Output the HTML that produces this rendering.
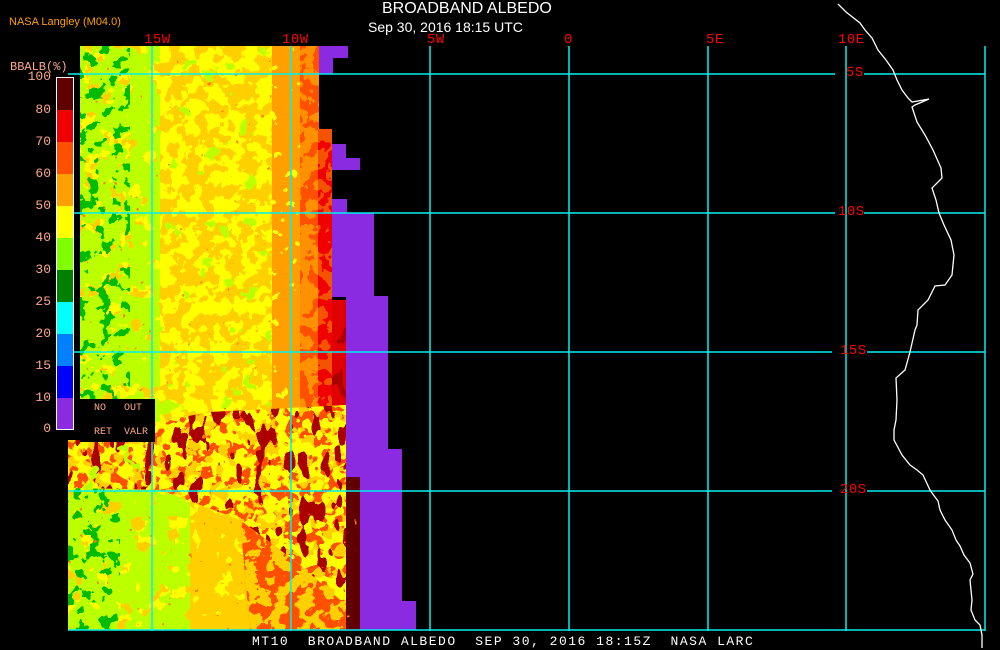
<!DOCTYPE html>
<html><head><meta charset="utf-8"><style>
html,body{margin:0;padding:0;background:#000;width:1000px;height:650px;overflow:hidden;font-family:"Liberation Sans",sans-serif}
.t{position:absolute;white-space:pre}
.m{font-family:"Liberation Mono","DejaVu Sans Mono",monospace}
.lab{color:#ffa888;font-size:13px;position:absolute;right:949px;text-align:right}
.g{color:#f00;font-size:14px;letter-spacing:0.5px}
</style></head><body>
<svg width="1000" height="650" style="position:absolute;left:0;top:0">
<defs>
<clipPath id="dc"><polygon points="80,46 319,46 319,129 332,129 332,300 346,300 346,477 360,477 360,630 68,630 68,440 80,440"/></clipPath>
<clipPath id="band"><polygon points="68,440 140,425 210,412 346,405 346,605 300,565 240,520 160,490 68,488"/></clipPath>
<clipPath id="below"><polygon points="68,488 160,490 240,520 300,565 346,605 346,630 68,630"/></clipPath>
<clipPath id="br"><polygon points="240,520 300,565 346,605 346,630 250,630"/></clipPath>
<filter id="fo" x="0" y="0" width="1" height="1"><feTurbulence type="fractalNoise" baseFrequency="0.07" numOctaves="3" seed="2"/><feColorMatrix type="matrix" values="0 0 0 0 1 0 0 0 0 0.63 0 0 0 0 0 1 0 0 0 0"/><feComponentTransfer><feFuncA type="discrete" tableValues="0 0 0 0 0 1 1 1 1 1"/></feComponentTransfer></filter>
<filter id="fo2" x="0" y="0" width="1" height="1"><feTurbulence type="fractalNoise" baseFrequency="0.06" numOctaves="3" seed="31"/><feColorMatrix type="matrix" values="0 0 0 0 1 0 0 0 0 0.63 0 0 0 0 0 1 0 0 0 0"/><feComponentTransfer><feFuncA type="discrete" tableValues="0 0 0 0 1 1 1 1 1 1"/></feComponentTransfer></filter>
<filter id="fg" x="0" y="0" width="1" height="1"><feTurbulence type="fractalNoise" baseFrequency="0.06" numOctaves="3" seed="4"/><feColorMatrix type="matrix" values="0 0 0 0 0.5 0 0 0 0 1 0 0 0 0 0 1 0 0 0 0"/><feComponentTransfer><feFuncA type="discrete" tableValues="0 0 0 0 1 1 1 1 1 1"/></feComponentTransfer></filter>
<filter id="fg2" x="0" y="0" width="1" height="1"><feTurbulence type="fractalNoise" baseFrequency="0.05" numOctaves="3" seed="14"/><feColorMatrix type="matrix" values="0 0 0 0 0.5 0 0 0 0 1 0 0 0 0 0 1 0 0 0 0"/><feComponentTransfer><feFuncA type="discrete" tableValues="0 0 0 0 0 0 0 1 1 1"/></feComponentTransfer></filter>
<filter id="fd" x="0" y="0" width="1" height="1"><feTurbulence type="fractalNoise" baseFrequency="0.08" numOctaves="3" seed="9"/><feColorMatrix type="matrix" values="0 0 0 0 0 0 0 0 0 0.5 0 0 0 0 0 1 0 0 0 0"/><feComponentTransfer><feFuncA type="discrete" tableValues="0 0 0 0 0 0 1 1 1 1"/></feComponentTransfer></filter>
<filter id="fr" x="0" y="0" width="1" height="1"><feTurbulence type="fractalNoise" baseFrequency="0.15" numOctaves="2" seed="5"/><feColorMatrix type="matrix" values="0 0 0 0 1 0 0 0 0 0.2 0 0 0 0 0 1 0 0 0 0"/><feComponentTransfer><feFuncA type="discrete" tableValues="0 0 0 0 0 0 0 0 1 1"/></feComponentTransfer></filter>
<filter id="fk" x="0" y="0" width="1" height="1"><feTurbulence type="fractalNoise" baseFrequency="0.09 0.04" numOctaves="2" seed="7"/><feColorMatrix type="matrix" values="0 0 0 0 0.4 0 0 0 0 0 0 0 0 0 0 1 0 0 0 0"/><feComponentTransfer><feFuncA type="discrete" tableValues="0 0 0 0 0 0 1 1 1 1"/></feComponentTransfer></filter>
<filter id="fy" x="0" y="0" width="1" height="1"><feTurbulence type="fractalNoise" baseFrequency="0.09" numOctaves="2" seed="11"/><feColorMatrix type="matrix" values="0 0 0 0 1 0 0 0 0 1 0 0 0 0 0 1 0 0 0 0"/><feComponentTransfer><feFuncA type="discrete" tableValues="0 0 0 0 0 1 1 1 1 1"/></feComponentTransfer></filter>
<filter id="fy2" x="0" y="0" width="1" height="1"><feTurbulence type="fractalNoise" baseFrequency="0.1" numOctaves="2" seed="21"/><feColorMatrix type="matrix" values="0 0 0 0 1 0 0 0 0 1 0 0 0 0 0 1 0 0 0 0"/><feComponentTransfer><feFuncA type="discrete" tableValues="0 0 0 0 0 0 0 1 1 1"/></feComponentTransfer></filter>
</defs>
<g fill="#8a2be2">
<rect x="318" y="46" width="30" height="12"/><rect x="318" y="58" width="15" height="16"/>
<rect x="332" y="144" width="14" height="26"/><rect x="332" y="158" width="28" height="12"/>
<rect x="332" y="199" width="15" height="14"/>
<rect x="332" y="213" width="42" height="84"/><rect x="346" y="296" width="42" height="154"/>
<rect x="346" y="449" width="56" height="28"/><rect x="360" y="477" width="42" height="125"/><rect x="360" y="601" width="56" height="29"/>
</g>
<g clip-path="url(#dc)">
<rect x="60" y="40" width="310" height="600" fill="#ffff00"/>
<rect x="60" y="40" width="310" height="600" filter="url(#fo)"/>
<rect x="60" y="40" width="100" height="600" filter="url(#fg)"/>
<rect x="150" y="40" width="130" height="600" filter="url(#fg2)"/>
<rect x="60" y="40" width="70" height="600" filter="url(#fd)"/>
<rect x="60" y="40" width="290" height="600" filter="url(#fr)"/>
<rect x="272" y="46" width="30" height="600" fill="#ffa000"/>
<rect x="262" y="46" width="40" height="600" filter="url(#fy2)"/>
<rect x="300" y="46" width="20" height="600" fill="#ff5000"/>
<rect x="300" y="46" width="20" height="600" filter="url(#fo)" opacity="0.5"/>
<rect x="318" y="129" width="15" height="520" fill="#f00000"/>
<rect x="318" y="129" width="15" height="520" filter="url(#fo)" opacity="0.4"/>
<rect x="332" y="300" width="14" height="330" fill="#e00000"/>
<rect x="332" y="300" width="14" height="330" filter="url(#fk)"/>
<rect x="346" y="477" width="14" height="153" fill="#600000"/>
<rect x="346" y="477" width="14" height="153" filter="url(#fr)"/>
<g clip-path="url(#band)">
<rect x="60" y="400" width="300" height="230" fill="#ff5000"/>
<rect x="60" y="400" width="300" height="230" filter="url(#fo)"/>
<rect x="60" y="400" width="300" height="230" filter="url(#fy)"/>
<rect x="60" y="400" width="300" height="230" filter="url(#fk)"/>
<rect x="60" y="400" width="300" height="230" filter="url(#fr)"/>
<rect x="60" y="400" width="110" height="230" filter="url(#fg2)"/>
</g>
<g clip-path="url(#below)">
<rect x="60" y="480" width="300" height="150" fill="#ffff00"/>
<rect x="60" y="480" width="300" height="150" filter="url(#fo)"/>
<rect x="190" y="480" width="160" height="150" filter="url(#fo2)"/>
<rect x="60" y="480" width="130" height="150" filter="url(#fg)"/>
<rect x="60" y="480" width="60" height="150" filter="url(#fd)"/>
<rect x="60" y="480" width="300" height="150" filter="url(#fr)"/>
</g>
<g clip-path="url(#br)">
<rect x="240" y="510" width="110" height="120" fill="#ff5000"/>
<rect x="240" y="510" width="110" height="120" filter="url(#fo)"/>
<rect x="240" y="510" width="110" height="120" filter="url(#fr)"/>
</g>
</g>
<g stroke="#00f0f0" stroke-width="1.5" fill="none">
<line x1="152" y1="46" x2="152" y2="631"/><line x1="291" y1="46" x2="291" y2="631"/><line x1="430" y1="46" x2="430" y2="631"/>
<line x1="569" y1="46" x2="569" y2="631"/><line x1="708" y1="46" x2="708" y2="631"/><line x1="846" y1="46" x2="846" y2="631"/><line x1="985" y1="46" x2="985" y2="631"/>
<line x1="68" y1="74" x2="835" y2="74"/><line x1="864" y1="74" x2="985" y2="74"/>
<line x1="68" y1="213" x2="835" y2="213"/><line x1="864" y1="213" x2="985" y2="213"/>
<line x1="68" y1="352" x2="832" y2="352"/><line x1="867" y1="352" x2="985" y2="352"/>
<line x1="68" y1="491" x2="832" y2="491"/><line x1="867" y1="491" x2="985" y2="491"/>
<line x1="68" y1="630" x2="985" y2="630"/>
</g>
<polyline fill="none" stroke="#fff" stroke-width="1.3" points="838,4 846,12 860,23 865,30 872,38 878,50 886,60 893,70 897,80 902,90 908,98 912,102 929,99 915,105 912,107 917,122 925,135 933,150 941,168 942,178 932,188 936,200 939,213 944,225 951,240 954,255 952,275 945,285 935,286 928,300 918,310 917,325 915,330 910,352 905,370 896,378 897,400 896,420 894,430 894,440 902,455 910,465 917,470 923,475 930,490 932,493 938,501 940,510 945,520 952,530 956,540 960,546 964,555 970,563 973,574 970,580 972,600 971,610 975,620 980,625 982,635 982,648"/>
<rect x="56" y="77" width="18" height="353" fill="#fff"/>
<g>
<rect x="57" y="78" width="16" height="32" fill="#600000"/><rect x="57" y="110" width="16" height="32" fill="#f00000"/>
<rect x="57" y="142" width="16" height="32" fill="#ff5000"/><rect x="57" y="174" width="16" height="32" fill="#ffa000"/>
<rect x="57" y="206" width="16" height="32" fill="#ffff00"/><rect x="57" y="238" width="16" height="32" fill="#80ff00"/>
<rect x="57" y="270" width="16" height="32" fill="#008000"/><rect x="57" y="302" width="16" height="32" fill="#00ffff"/>
<rect x="57" y="334" width="16" height="32" fill="#0080ff"/><rect x="57" y="366" width="16" height="32" fill="#0000ff"/>
<rect x="57" y="398" width="16" height="31" fill="#8a2be2"/>
</g>
<rect x="80" y="399" width="75" height="43" fill="#000"/>
</svg>
<div class="t" style="left:382px;top:0;color:#fff;font-size:16px">BROADBAND ALBEDO</div>
<div class="t" style="left:368px;top:19px;color:#fff;font-size:14px">Sep 30, 2016 18:15 UTC</div>
<div class="t" style="left:9px;top:16px;color:#ffa000;font-size:11px">NASA Langley (M04.0)</div>
<div class="t m" style="left:10px;top:60px;color:#ffa888;font-size:12px">BBALB(%)</div>
<div class="t m g" style="left:144px;top:32px">15W</div>
<div class="t m g" style="left:282px;top:32px">10W</div>
<div class="t m g" style="left:427px;top:32px">5W</div>
<div class="t m g" style="left:564px;top:32px">0</div>
<div class="t m g" style="left:706px;top:32px">5E</div>
<div class="t m g" style="left:838px;top:32px">10E</div>
<div class="t m g" style="left:846px;top:65px">5S</div>
<div class="t m g" style="left:838px;top:204px">10S</div>
<div class="t m g" style="left:840px;top:343px">15S</div>
<div class="t m g" style="left:840px;top:482px">20S</div>
<div class="lab m" style="top:69px">100</div><div class="lab m" style="top:102px">80</div>
<div class="lab m" style="top:134px">70</div><div class="lab m" style="top:166px">60</div>
<div class="lab m" style="top:198px">50</div><div class="lab m" style="top:230px">40</div>
<div class="lab m" style="top:262px">30</div><div class="lab m" style="top:294px">25</div>
<div class="lab m" style="top:326px">20</div><div class="lab m" style="top:358px">15</div>
<div class="lab m" style="top:390px">10</div><div class="lab m" style="top:421px">0</div>
<div class="t m" style="left:94px;top:403px;color:#ffa888;font-size:10px">NO</div>
<div class="t m" style="left:124px;top:403px;color:#ffa888;font-size:10px">OUT</div>
<div class="t m" style="left:94px;top:427px;color:#ffa888;font-size:10px">RET</div>
<div class="t m" style="left:124px;top:427px;color:#ffa888;font-size:10px">VALR</div>
<div class="t m" style="left:252px;top:634px;color:#fff;font-size:13px;letter-spacing:1.5px">MT10  BROADBAND ALBEDO  SEP 30, 2016 18:15Z  NASA LARC</div>
</body></html>
